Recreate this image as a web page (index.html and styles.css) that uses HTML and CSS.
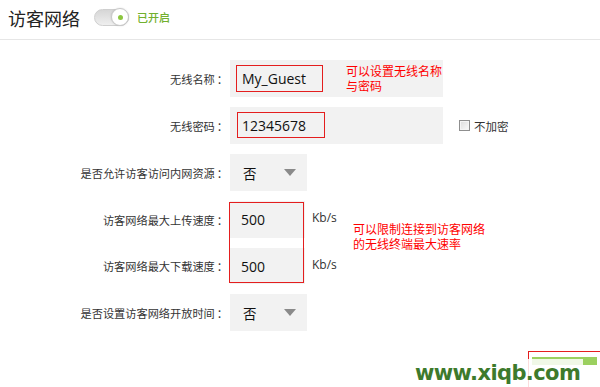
FILE: index.html
```html
<!DOCTYPE html>
<html lang="zh">
<head>
<meta charset="utf-8">
<link rel="stylesheet" href="styles.css">
</head>
<body>
<div class="page">
  <header class="head">
    <h1 class="title">访客网络</h1>
    <span class="toggle"><span class="knob"><span class="dot"></span></span></span>
    <span class="state">已开启</span>
  </header>

  <div class="form">
    <div class="row">
      <div class="label">无线名称<span class="colon">：</span></div>
      <div class="field wide">
        <span class="val">My_Guest</span>
        <span class="mark mark-name"></span>
        <span class="note note-name">可以设置无线名称<br>与密码</span>
      </div>
    </div>

    <div class="row">
      <div class="label">无线密码<span class="colon">：</span></div>
      <div class="field wide">
        <span class="val">12345678</span>
        <span class="mark mark-pwd"></span>
      </div>
      <label class="check"><span class="box"></span>不加密</label>
    </div>

    <div class="row">
      <div class="label">是否允许访客访问内网资源<span class="colon">：</span></div>
      <div class="field select"><span class="opt">否</span><span class="arrow"></span></div>
    </div>

    <div class="speed">
      <div class="row">
        <div class="label">访客网络最大上传速度<span class="colon">：</span></div>
        <div class="field num"><span class="val">500</span></div>
        <span class="unit">Kb/s</span>
      </div>
      <div class="row">
        <div class="label">访客网络最大下载速度<span class="colon">：</span></div>
        <div class="field num"><span class="val">500</span></div>
        <span class="unit">Kb/s</span>
      </div>
      <span class="mark mark-speed"></span>
      <span class="note note-speed">可以限制连接到访客网络<br>的无线终端最大速率</span>
    </div>

    <div class="row">
      <div class="label">是否设置访客网络开放时间<span class="colon">：</span></div>
      <div class="field select"><span class="opt">否</span><span class="arrow"></span></div>
    </div>
  </div>

  <div class="btn-corner"><span class="btn-bar"></span></div>
  <div class="watermark">www.xiqb.com</div>
</div>
</body>
</html>
```

FILE: styles.css
```css
html, body {
  margin: 0;
  padding: 0;
  background: #fff;
}
body {
  font-family: "Noto Sans CJK SC", "Noto Sans", sans-serif;
  color: #333;
  width: 600px;
  height: 387px;
  overflow: hidden;
}
.page {
  position: relative;
  width: 600px;
  height: 387px;
}
.head {
  height: 39px;
  border-bottom: 1px solid #e6e6e6;
  display: flex;
  align-items: center;
  padding-left: 8px;
}
.title {
  margin: 0;
  font-size: 18px;
  font-weight: normal;
  color: #222;
  line-height: 1;
  margin-top: -4px;
}
.toggle {
  margin-left: 14px;
  margin-top: -5px;
  width: 35px;
  height: 17px;
  border-radius: 9px;
  background: linear-gradient(#d6d6d6, #efefef);
  border: 1px solid #cfcfcf;
  box-sizing: border-box;
  display: flex;
  justify-content: flex-end;
  align-items: center;
}
.knob {
  width: 18px;
  height: 18px;
  border-radius: 50%;
  background: #fff;
  border: 1px solid #c8c8c8;
  box-sizing: border-box;
  margin-right: -1px;
  display: flex;
  align-items: center;
  justify-content: center;
  box-shadow: 0 0 2px rgba(0,0,0,0.15);
}
.dot {
  width: 5px;
  height: 5px;
  border-radius: 50%;
  background: #8cc63f;
}
.state {
  margin-left: 8px;
  margin-top: -5px;
  font-size: 11px;
  color: #72b02e;
  font-weight: 500;
}
.form {
  padding-top: 20px;
  display: flex;
  flex-direction: column;
  gap: 10px;
}
.row {
  display: flex;
  align-items: center;
  height: 37px;
}
.label {
  width: 226px;
  text-align: right;
  font-size: 11.2px;
  color: #333;
  margin-right: 4px;
  white-space: nowrap;
}
.colon {
  padding-left: 2px;
  margin-right: -2px;
}
.field {
  position: relative;
  height: 37px;
  background: #f2f2f2;
  display: flex;
  align-items: center;
  box-sizing: border-box;
}
.field.wide {
  width: 213px;
}
.field.select {
  width: 77px;
  padding-left: 13px;
}
.field.num {
  width: 75px;
  padding-left: 11px;
}
.val {
  font-family: "Open Sans", "Noto Sans", sans-serif;
  font-size: 14px;
  color: #111;
}
.wide .val {
  padding-left: 12px;
}
.opt {
  font-size: 13.5px;
  color: #111;
}
.arrow {
  margin-left: 27px;
  width: 0;
  height: 0;
  border-left: 6px solid transparent;
  border-right: 6px solid transparent;
  border-top: 7px solid #8a8a8a;
}
.mark {
  position: absolute;
  border: 1.5px solid #e41e1e;
  box-sizing: border-box;
}
.mark-name {
  left: 6px;
  top: 5px;
  width: 87px;
  height: 27px;
}
.mark-pwd {
  left: 7px;
  top: 5px;
  width: 88px;
  height: 26px;
}
.note {
  position: absolute;
  color: #f00;
  font-size: 12px;
  line-height: 15px;
  white-space: nowrap;
}
.note-name {
  left: 116px;
  top: 3px;
}
.check {
  display: flex;
  align-items: center;
  margin-left: 16px;
  font-size: 11.5px;
  color: #333;
}
.box {
  width: 11px;
  height: 11px;
  border: 1px solid #8f8f8f;
  box-sizing: border-box;
  background: linear-gradient(135deg, #dcdcdc, #fafafa);
  margin-right: 4px;
  box-shadow: inset 0 0 0 1px #f4f4f4;
}
.speed {
  position: relative;
  display: flex;
  flex-direction: column;
  gap: 10px;
}
.speed .row + .row {
  height: 36px;
}
.speed .row + .row .field {
  height: 36px;
}
.unit {
  margin-left: 7px;
  margin-top: -4px;
  font-family: "Open Sans", "Noto Sans", sans-serif;
  font-size: 12px;
  color: #333;
}
.mark-speed {
  left: 229px;
  top: 1px;
  width: 75px;
  height: 81px;
}
.note-speed {
  left: 353px;
  top: 20px;
}
.btn-corner {
  position: absolute;
  left: 528px;
  top: 351px;
  width: 80px;
  height: 40px;
  border-top: 1.5px solid #e41e1e;
  border-left: 1.5px solid #e41e1e;
  box-sizing: border-box;
  padding: 5px 0 0 3px;
}
.btn-bar {
  display: block;
  width: 65px;
  height: 8px;
  background: #9bd05f;
}
.watermark {
  position: absolute;
  left: 412px;
  top: 359px;
  font-family: "DejaVu Sans", Verdana, sans-serif;
  font-weight: bold;
  font-size: 21px;
  line-height: 28px;
  color: #3d7a2c;
  background: rgba(255,255,255,0.85);
  padding: 0 3px;
  letter-spacing: -0.6px;
}
```
